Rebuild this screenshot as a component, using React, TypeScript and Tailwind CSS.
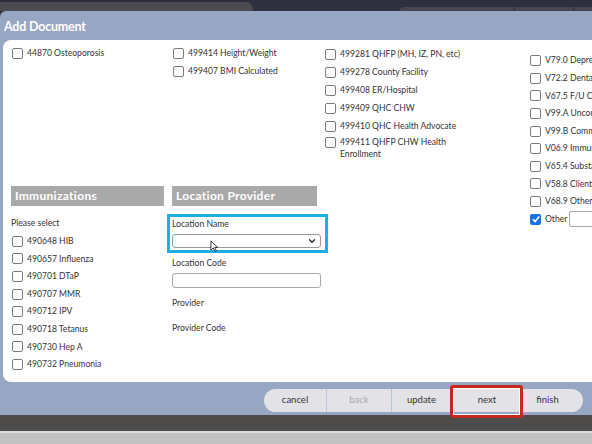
import { ChevronDown } from "lucide-react";

const screeningA = ["44870 Osteoporosis"];
const screeningB = ["499414 Height/Weight", "499407 BMI Calculated"];
const referrals = [
  "499281 QHFP (MH, IZ, PN, etc)",
  "499278 County Facility",
  "499408 ER/Hospital",
  "499409 QHC CHW",
  "499410 QHC Health Advocate",
  "499411 QHFP CHW Health Enrollment",
];
const vCodes = [
  "V79.0 Depression Screening",
  "V72.2 Dental Exam",
  "V67.5 F/U Case Management",
  "V99.A Uncompensated Care",
  "V99.B Community Outreach",
  "V06.9 Immunization",
  "V65.4 Substance Abuse",
  "V58.8 Client Health Ed",
  "V68.9 Other (specify)",
];
const immunizations = [
  "490648 HIB",
  "490657 Influenza",
  "490701 DTaP",
  "490707 MMR",
  "490712 IPV",
  "490718 Tetanus",
  "490730 Hep A",
  "490732 Pneumonia",
];

function Box({ checked = false }: { checked?: boolean }) {
  if (checked) {
    return (
      <span className="flex h-[11px] w-[11px] shrink-0 items-center justify-center rounded-[2px] bg-[#1a73e8]">
        <svg viewBox="0 0 12 12" className="h-[10px] w-[10px]">
          <path d="M2.2 6.3 L4.9 9 L9.9 3" fill="none" stroke="#fff" strokeWidth="2" />
        </svg>
      </span>
    );
  }
  return <span className="block h-[11px] w-[11px] shrink-0 rounded-[2px] border border-[#7a7a7a] bg-white" />;
}

function Item({ label, tall = false }: { label: string; tall?: boolean }) {
  return (
    <div className={`flex items-center gap-[4px] whitespace-nowrap ${tall ? "h-[18px]" : "h-[17.6px]"}`}>
      <Box />
      <span>{label}</span>
    </div>
  );
}

function SectionHead({ title, width }: { title: string; width: string }) {
  return (
    <div className={`flex h-[20px] items-center bg-[#a9a9a9] pl-[4px] text-[12px] font-bold tracking-[0.3px] text-white ${width}`}>
      {title}
    </div>
  );
}

export default function App() {
  return (
    <div className="flex h-[444px] w-[592px] flex-col overflow-hidden bg-[#2e3040] font-['Lato',sans-serif] text-[8.6px] text-[#333]">
      {/* window behind */}
      <div className="flex h-[11px] items-end justify-between">
        <div className="h-[9px] w-[253px] rounded-tr-[8px] bg-[#4a4a50]" />
        <div className="flex h-[4px] w-[192px] gap-[1px]">
          <div className="flex-1 rounded-tl-[4px] bg-[#45464f]" />
          <div className="w-[58px] bg-[#45464f]" />
          <div className="w-[18px] bg-[#45464f]" />
        </div>
      </div>

      {/* modal */}
      <div className="flex h-[404px] flex-col rounded-tl-[6px] bg-[#97a7c3]">
        <div className="flex h-[29px] items-center pl-[4px] pt-[3px] text-[12.5px] font-bold tracking-[-0.2px] text-white">
          Add Document
        </div>

        <div className="relative ml-[3px] flex h-[342px] rounded-l-[8px] bg-white pl-[8px] pt-[5px]">
          {/* col 1 */}
          <div className="w-[161px] shrink-0">
            <div className="h-[141px] pl-[1px]">
              {screeningA.map((s) => (
                <Item key={s} label={s} />
              ))}
            </div>
            <SectionHead title="Immunizations" width="w-[153px]" />
            <div className="mt-[9px] flex h-[17.6px] items-center">Please select</div>
            <div className="pl-[1px]">
              {immunizations.map((s) => (
                <Item key={s} label={s} />
              ))}
            </div>
          </div>

          {/* col 2 */}
          <div className="w-[153px] shrink-0">
            <div className="h-[141px] pl-[1px]">
              {screeningB.map((s) => (
                <Item key={s} label={s} />
              ))}
            </div>
            <SectionHead title="Location Provider" width="w-[145px]" />
            <div className="-ml-[5px] mt-[8px] w-[161px] border-[3px] border-[#1daee4] pb-[2px] pl-[2px] pt-[1px]">
              <div className="flex h-[12px] items-center">Location Name</div>
              <div className="mt-[4px] flex h-[14px] w-[149px] items-center justify-end rounded-[3px] border border-[#9a9a9a] bg-white pr-[3px]">
                <ChevronDown className="h-[10px] w-[10px] text-[#222]" strokeWidth={3} />
              </div>
            </div>
            <div className="mt-[4px] flex h-[12px] items-center">Location Code</div>
            <div className="mt-[4px] h-[15px] w-[149px] rounded-[3px] border border-[#a8a8a8] bg-white" />
            <div className="mt-[9px] flex h-[12px] items-center">Provider</div>
            <div className="mt-[13px] flex h-[12px] items-center">Provider Code</div>
          </div>

          {/* col 3 */}
          <div className="w-[205px] shrink-0">
            {referrals.slice(0, 5).map((s) => (
              <Item key={s} label={s} tall />
            ))}
            <div className="mt-[1px] flex items-start gap-[4px] leading-[12px]">
              <span className="mt-[1px] flex">
                <Box />
              </span>
              <span className="w-[112px]">{referrals[5]}</span>
            </div>
          </div>

          {/* col 4 */}
          <div className="mt-[7px] min-w-0 flex-1 overflow-hidden">
            {vCodes.map((s) => (
              <Item key={s} label={s} />
            ))}
            <div className="flex h-[17.6px] items-center gap-[4px] whitespace-nowrap">
              <Box checked />
              <span>Other</span>
              <span className="-ml-[2px] h-[16px] w-[80px] shrink-0 rounded-[2px] border border-[#a8a8a8] bg-white" />
            </div>
          </div>

          {/* mouse pointer */}
          <svg viewBox="0 0 10 14" className="absolute left-[207px] top-[200px] h-[13px] w-[9px]">
            <path d="M1 1 L1 11 L3.6 8.6 L5.4 12.6 L7 11.9 L5.3 8 L8.6 8 Z" fill="#fff" stroke="#111" strokeWidth="0.9" />
          </svg>
        </div>

        {/* footer buttons */}
        <div className="flex h-[33px] justify-end pr-[9px] pt-[7px]">
          <div className="flex h-[23px] rounded-full bg-[#e3e3e7] text-[9.5px] text-[#333]">
            <div className="flex w-[63px] items-center justify-center border-r border-[#b9c4d8]">cancel</div>
            <div className="flex w-[65px] items-center justify-center border-r border-[#b9c4d8] text-[#a9a9a9]">back</div>
            <div className="flex w-[60px] items-center justify-center border-r border-[#b9c4d8]">update</div>
            <div className="relative flex w-[70px] items-center justify-center">
              next
              <div className="absolute -bottom-[6px] -left-[2px] -right-[1px] -top-[4px] rounded-[3px] border-[3px] border-[#c3291d] shadow-[inset_0_0_0_1px_#fff]" />
            </div>
            <div className="flex w-[61px] items-center justify-center pr-[10px]">finish</div>
          </div>
        </div>
      </div>

      <div className="h-[16px] bg-[#4e4b4b]" />
      <div className="h-[2px] bg-[#dcdcdc]" />
      <div className="flex-1 bg-[#c2c2c2]" />
    </div>
  );
}
